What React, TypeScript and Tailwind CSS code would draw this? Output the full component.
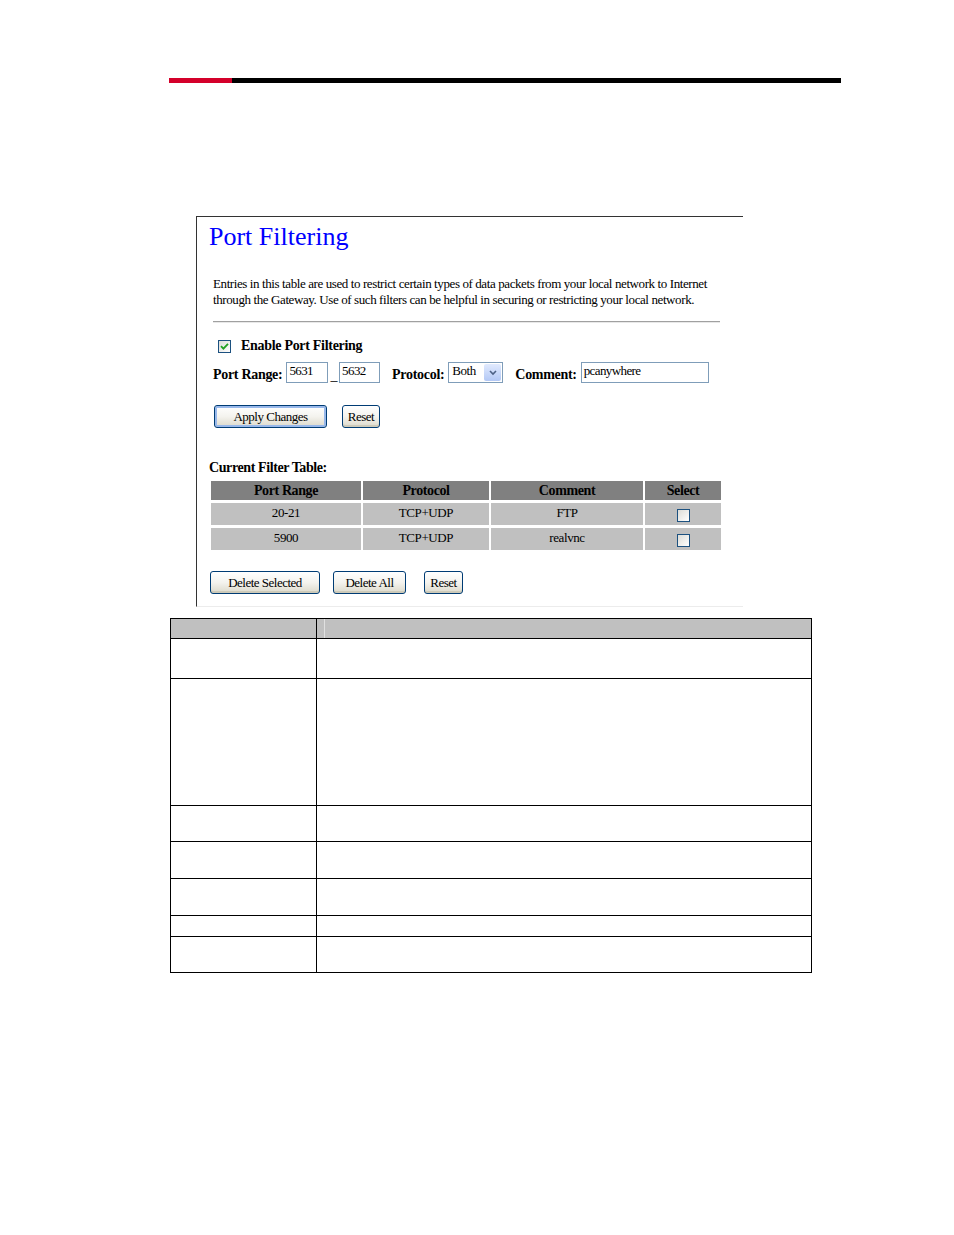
import React from 'react';

const serif = { fontFamily: '"Liberation Serif", "Times New Roman", serif' };

const filters = [
  { range: '20-21', protocol: 'TCP+UDP', comment: 'FTP' },
  { range: '5900', protocol: 'TCP+UDP', comment: 'realvnc' },
];

// heights of the empty rows in the description table under the screenshot
const descRows = [40, 127, 36, 37, 37, 21, 36];

function XpButton({ label, width, focused }: { label: string; width: string; focused?: boolean }) {
  return (
    <button
      className={`${width} h-[23px] rounded-[3px] border border-[#003c74] bg-gradient-to-b from-white via-[#f4f3ee] to-[#dcd9cb] text-[13px] leading-none text-black tracking-[-0.5px] ${
        focused ? 'shadow-[inset_0_0_0_2px_#98b8ea]' : 'shadow-[inset_0_-2px_0_#cdcab9]'
      }`}
    >
      {label}
    </button>
  );
}

function Checkbox({ checked }: { checked?: boolean }) {
  return (
    <span className="flex h-[13px] w-[13px] items-center justify-center border border-[#1c5180] bg-gradient-to-br from-[#dcdcd7] to-white">
      {checked && (
        <svg width="9" height="9" viewBox="0 0 9 9">
          <path d="M1 4.2 L3.4 6.6 L8 1.8" fill="none" stroke="#21a121" strokeWidth="1.8" />
        </svg>
      )}
    </span>
  );
}

function TextBox({ value, width }: { value: string; width: string }) {
  return (
    <div className={`${width} h-[21px] border border-[#7f9db9] bg-white pl-[2px] text-[13px] font-normal leading-[16px] tracking-[-0.6px]`}>
      {value}
    </div>
  );
}

function Screenshot() {
  return (
    <div className="ml-[196px] w-[547px] h-[391px] border-l border-t border-[#333] border-b border-b-[#ececec]" style={serif}>
      <div className="pl-[12px] pt-[3px] text-[26px] leading-[34px] text-[#0000ff] tracking-[0px]">Port Filtering</div>
      <div className="pl-[16px] pt-[22px] w-[518px] text-[13px] leading-[16px] tracking-[-0.4px] text-black">
        Entries in this table are used to restrict certain types of data packets from your local network to Internet through the Gateway. Use of such filters can be helpful in securing or restricting your local network.
      </div>
      <div className="ml-[16px] mt-[13px] w-[507px] h-[2px] border-t border-[#a0a0a0] border-b border-b-[#e8e8e8]" />

      <div className="ml-[21px] mt-[15px] flex items-center gap-[10px]">
        <Checkbox checked />
        <span className="text-[14px] font-bold leading-[16px] tracking-[-0.3px]">Enable Port Filtering</span>
      </div>

      <div className="ml-[16px] mt-[8px] flex items-end text-[14px] font-bold tracking-[-0.3px]">
        <span className="mr-[4px] leading-[16px]">Port Range:</span>
        <TextBox value="5631" width="w-[42px]" />
        <span className="mx-[2px] leading-[14px] font-normal">_</span>
        <TextBox value="5632" width="w-[41px]" />
        <span className="ml-[12px] mr-[4px] leading-[16px]">Protocol:</span>
        <div className="flex h-[21px] w-[55px] border border-[#7f9db9] bg-white">
          <span className="flex-1 pl-[3px] text-[13px] font-normal leading-[16px] tracking-[-0.5px]">Both</span>
          <span className="m-[1px] flex w-[17px] items-center justify-center rounded-[2px] bg-gradient-to-b from-[#e1eafe] to-[#b3c8f5]">
            <svg width="8" height="6" viewBox="0 0 8 6">
              <path d="M1 1 L4 4 L7 1" fill="none" stroke="#4d6185" strokeWidth="1.6" />
            </svg>
          </span>
        </div>
        <span className="ml-[12px] mr-[4px] leading-[16px]">Comment:</span>
        <TextBox value="pcanywhere" width="w-[128px]" />
      </div>

      <div className="ml-[17px] mt-[22px] flex gap-[15px]">
        <XpButton label="Apply Changes" width="w-[113px]" focused />
        <XpButton label="Reset" width="w-[38px]" />
      </div>

      <div className="ml-[12px] mt-[32px] text-[14px] font-bold leading-[16px] tracking-[-0.4px]">Current Filter Table:</div>

      <div className="ml-[14px] mt-[5px] w-[510px] grid grid-cols-[150px_126px_152px_76px] gap-[2px] text-[14px] tracking-[-0.4px]">
        {['Port Range', 'Protocol', 'Comment', 'Select'].map((h) => (
          <div key={h} className="h-[19px] bg-[#808080] text-center font-bold leading-[19px]">
            {h}
          </div>
        ))}
        {filters.map((f) => (
          <React.Fragment key={f.range}>
            <div className="mt-[1px] h-[22px] bg-[#c0c0c0] text-center text-[13px] leading-[20px]">{f.range}</div>
            <div className="mt-[1px] h-[22px] bg-[#c0c0c0] text-center text-[13px] leading-[20px]">{f.protocol}</div>
            <div className="mt-[1px] h-[22px] bg-[#c0c0c0] text-center text-[13px] leading-[20px]">{f.comment}</div>
            <div className="mt-[1px] flex h-[22px] items-center justify-center bg-[#c0c0c0] pt-[3px]">
              <Checkbox />
            </div>
          </React.Fragment>
        ))}
      </div>

      <div className="ml-[13px] mt-[21px] flex items-start">
        <XpButton label="Delete Selected" width="w-[110px]" />
        <span className="ml-[13px] flex">
          <XpButton label="Delete All" width="w-[73px]" />
        </span>
        <span className="ml-[18px] flex">
          <XpButton label="Reset" width="w-[39px]" />
        </span>
      </div>
    </div>
  );
}

export default function App() {
  return (
    <div className="w-[954px] h-[1235px] bg-white pt-[78px]">
      <div className="ml-[169px] flex w-[672px] h-[5px]">
        <div className="w-[63px] bg-[#d4002a]" />
        <div className="flex-1 bg-black" />
      </div>

      <div className="mt-[133px]">
        <Screenshot />
      </div>

      <div className="ml-[170px] mt-[11px] w-[642px] border-[1.5px] border-black">
        <div className="grid grid-cols-[146px_1fr] h-[19px] bg-[#c0c0c0]">
          <div className="border-r-[1.5px] border-black" />
          <div className="ml-[7px] border-l border-[#e0e0e0]" />
        </div>
        {descRows.map((h, i) => (
          <div key={i} className="grid grid-cols-[146px_1fr] border-t-[1.5px] border-black" style={{ height: h }}>
            <div className="border-r-[1.5px] border-black" />
            <div />
          </div>
        ))}
      </div>
    </div>
  );
}
